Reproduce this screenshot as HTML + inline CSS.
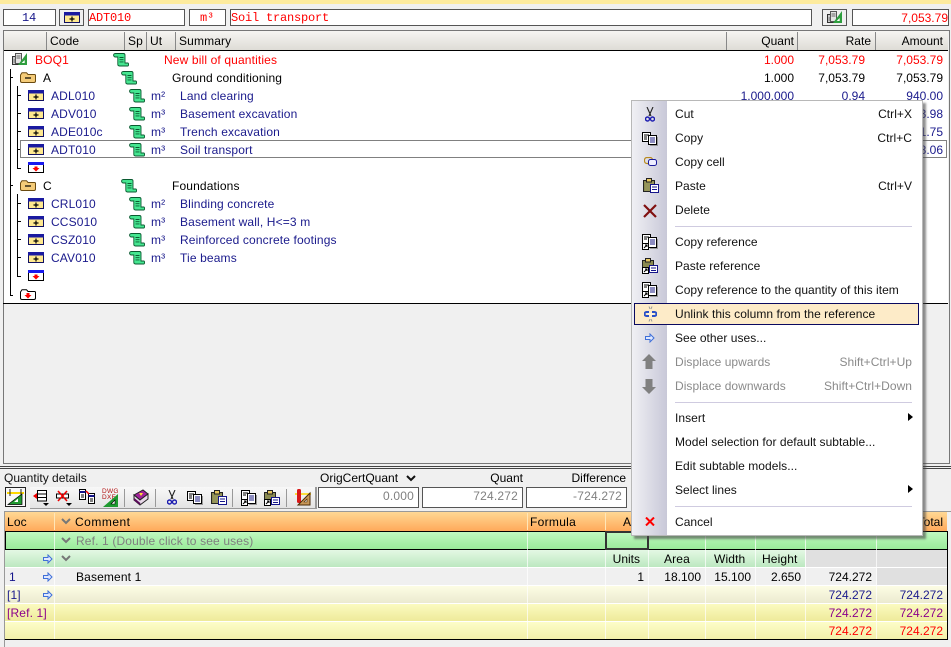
<!DOCTYPE html>
<html><head><meta charset="utf-8"><style>
html,body{margin:0;padding:0}
body{width:951px;height:647px;overflow:hidden;position:relative;background:#f0f0f0;font:12px/18px "Liberation Sans",Arial,sans-serif;color:#000}
div,svg{position:absolute}
.t,.r{position:absolute;white-space:nowrap;height:18px;line-height:18px}
.t{letter-spacing:.14px}
.mono{font:12px/18px "Liberation Mono",monospace;letter-spacing:-.2px}
.rows .t,.rows .r{margin-top:1px}
.b{color:#1a1a8c}.red{color:#f00}.p{color:#8b008b}.g{color:#808080}
.f{background:#fff;border:1px solid #555;box-sizing:border-box}
.m{color:#111;letter-spacing:.04px}
.dis{color:#8a8a8a}
.l{background:#000}
.gl{background:#fff}
.sep{background:#cfcbe0;left:675px;width:237px;height:1px}
</style></head><body>
<svg width="0" height="0" style="position:absolute"><defs>
<symbol id="i" viewBox="0 0 16 11"><rect x=".5" y=".5" width="15" height="10" fill="#ffe98f" stroke="#101060"/><rect width="16" height="3.5" fill="#1a1aa0"/><path d="M8 4.500v5M5.500 7h5" stroke="#000" stroke-width="1.200"/></symbol>
<symbol id="e" viewBox="0 0 16 11"><rect x=".5" y=".5" width="15" height="10" fill="#fff" stroke="#000"/><rect width="16" height="3" fill="#1a1aee"/><path d="M8 9.500 4.500 6h2V4.500h3V6h2z" fill="#f00"/></symbol>
<symbol id="s" viewBox="0 0 16 14"><path d="M.7 1.500C1 .7 1.500.5 2.500.5h8c1 0 1.500.7 1.500 1.500v8h3c.8.500.8 2.600 0 3H6.500c-1 0-1.700-.7-1.700-1.700V4H2.300C1 4 .3 2.500.7 1.500z" fill="#45e690" stroke="#0a5a30" stroke-width=".9"/><path d="M6.500 4.500h4M6.500 6.700h4M6.500 8.900h4" stroke="#0a5a30" stroke-width=".9"/></symbol>
<symbol id="fo" viewBox="0 0 16 11"><path d="M.5 3 2 .7h4.500L8 2.500h6.500c.6 0 1 .5 1 1v5.500c0 1-.7 1.500-1.500 1.500H2c-1 0-1.500-.7-1.500-1.500z" fill="#f4cb78" stroke="#6a4a10"/><path d="M5 6h6" stroke="#000" stroke-width="1.200"/></symbol>
<symbol id="boq" viewBox="0 0 15 12"><rect x=".5" y="3.500" width="6" height="8" fill="#ccc" stroke="#333"/><rect x="3.500" y=".5" width="6" height="10" fill="#e4e4e4" stroke="#555"/><path d="M4.500 3h4M4.500 5h4M1.500 7h2M1.500 9h2" stroke="#666"/><path d="M15 0v12H6z" fill="#2e9e3e"/><path d="M12.700 7v3h-3z" fill="#fff"/></symbol>
<symbol id="arr" viewBox="0 0 10 10"><path d="M.5 3.500h4.500V1l4 4-4 4V6.500H.5z" fill="#dfe8ff" stroke="#3f6fd8"/></symbol>
<symbol id="chev" viewBox="0 0 10 7"><path d="M1 1l4 4 4-4" fill="none" stroke="#777" stroke-width="2"/></symbol>
<symbol id="cut" viewBox="0 0 10 15"><path d="M2 0l4 9M8 0L4 9" stroke="#222" fill="none" stroke-width="1.100"/><circle cx="2.500" cy="12" r="2" fill="none" stroke="#1a1ab0" stroke-width="1.400"/><circle cx="7.500" cy="12" r="2" fill="none" stroke="#1a1ab0" stroke-width="1.400"/></symbol>
<symbol id="copy" viewBox="0 0 16 14"><path d="M9 5h7v9H8z" fill="#999"/><rect x=".5" y=".5" width="8" height="9" fill="#fff" stroke="#000"/><path d="M2 3h5M2 5h3M2 7h3" stroke="#000"/><rect x="6.500" y="3.500" width="8" height="9" fill="#fff" stroke="#000"/><path d="M8 6h5M8 8h5M8 10h5" stroke="#1a1a80"/></symbol>
<symbol id="paste" viewBox="0 0 16 15"><rect x=".5" y="2.500" width="11" height="11" fill="#8a8a50" stroke="#222"/><path d="M2 4h9v9H2z" fill="#9a9a60" opacity=".7"/><rect x="3.500" y=".5" width="5" height="3.500" fill="#e8c860" stroke="#222"/><rect x="7.500" y="6.500" width="8" height="8" fill="#fff" stroke="#14148a"/><path d="M9 9h5M9 11.500h5" stroke="#14148a"/></symbol>
<symbol id="cref" viewBox="0 0 16 16"><path d="M9 5h7v10H8z" fill="#999"/><rect x=".5" y=".5" width="8" height="10" fill="#fff" stroke="#000"/><path d="M2 3h5M2 5h3" stroke="#000"/><rect x="6.500" y="3.500" width="8" height="10" fill="#fff" stroke="#000"/><path d="M8 6h5M8 8h5M8 10h5" stroke="#1a1a80"/><rect x=".5" y="9.500" width="6" height="6" fill="#fff" stroke="#000"/><path d="M2 14l3-3M3 11h2v2" stroke="#000" fill="none"/></symbol>
<symbol id="pref" viewBox="0 0 16 16"><rect x=".5" y="2.500" width="11" height="11" fill="#8a8a50" stroke="#222"/><rect x="3.500" y=".5" width="5" height="3.500" fill="#e8c860" stroke="#222"/><rect x="7.500" y="7.500" width="8" height="7" fill="#fff" stroke="#14148a"/><path d="M9 10h5M9 12.500h5" stroke="#14148a"/><rect x=".5" y="9.500" width="6" height="6" fill="#fff" stroke="#000"/><path d="M2 14l3-3M3 11h2v2" stroke="#000" fill="none"/></symbol>
</defs></svg>

<!-- top -->
<div style="left:0;top:0;width:951px;height:4px;background:#fdeb9e"></div>
<div class="f" style="left:3px;top:9px;width:53px;height:17px"></div>
<span class="t b mono" style="left:22px;top:9px">14</span>
<div class="f" style="left:59px;top:9px;width:25px;height:17px;background:#f0f0f0"></div>
<svg style="left:64px;top:12px" width="16" height="11"><use href="#i"/></svg>
<div class="f" style="left:88px;top:9px;width:97px;height:17px"></div>
<span class="t red mono" style="left:89px;top:9px">ADT010</span>
<div class="f" style="left:189px;top:9px;width:37px;height:17px"></div>
<span class="t red mono" style="left:200px;top:9px">m³</span>
<div class="f" style="left:230px;top:9px;width:582px;height:17px"></div>
<span class="t red mono" style="left:231px;top:9px">Soil transport</span>
<div class="f" style="left:822px;top:9px;width:25px;height:17px;background:#f0f0f0"></div>
<svg style="left:827px;top:11px" width="15" height="12"><use href="#boq"/></svg>
<div class="f" style="left:852px;top:9px;width:97px;height:17px"></div>
<span class="r red" style="right:3px;top:9px">7,053.79</span>

<!-- main grid -->
<div style="left:3px;top:30px;width:945px;height:432px;border:1px solid #777;background:#f0f0f0"></div>
<div style="left:4px;top:31px;width:944px;height:19px;background:linear-gradient(#f6f5f2,#dedcd6)"></div>
<div class="l" style="left:4px;top:50px;width:944px;height:1px"></div>
<div style="left:4px;top:51px;width:944px;height:252px;background:#fff"></div>
<div class="l" style="left:3px;top:303px;width:945px;height:1px"></div>
<div style="left:46px;top:32px;width:1px;height:18px;background:#888"></div>
<div style="left:124px;top:32px;width:1px;height:18px;background:#888"></div>
<div style="left:146px;top:32px;width:1px;height:18px;background:#888"></div>
<div style="left:175px;top:32px;width:1px;height:18px;background:#888"></div>
<div style="left:726px;top:32px;width:1px;height:18px;background:#888"></div>
<div style="left:797px;top:32px;width:1px;height:18px;background:#888"></div>
<div style="left:875px;top:32px;width:1px;height:18px;background:#888"></div>
<span class="t" style="left:50px;top:32px">Code</span>
<span class="t" style="left:128px;top:32px">Sp</span>
<span class="t" style="left:150px;top:32px">Ut</span>
<span class="t" style="left:179px;top:32px">Summary</span>
<span class="r" style="right:157px;top:32px">Quant</span>
<span class="r" style="right:80px;top:32px">Rate</span>
<span class="r" style="right:8px;top:32px">Amount</span>

<!-- tree lines -->
<div class="l" style="left:10px;top:69px;width:1px;height:226px"></div>
<div class="l" style="left:10px;top:295px;width:3px;height:1px"></div>
<div class="l" style="left:10px;top:77px;width:3px;height:1px"></div>
<div class="l" style="left:10px;top:185px;width:3px;height:1px"></div>
<div class="l" style="left:17px;top:86px;width:1px;height:83px"></div>
<div class="l" style="left:17px;top:194px;width:1px;height:83px"></div>
<div class="l" style="left:18px;top:95px;width:3px;height:1px"></div>
<div class="l" style="left:18px;top:113px;width:3px;height:1px"></div>
<div class="l" style="left:18px;top:131px;width:3px;height:1px"></div>
<div class="l" style="left:18px;top:149px;width:3px;height:1px"></div>
<div class="l" style="left:18px;top:168px;width:3px;height:1px"></div>
<div class="l" style="left:18px;top:203px;width:3px;height:1px"></div>
<div class="l" style="left:18px;top:221px;width:3px;height:1px"></div>
<div class="l" style="left:18px;top:239px;width:3px;height:1px"></div>
<div class="l" style="left:18px;top:257px;width:3px;height:1px"></div>
<div class="l" style="left:18px;top:276px;width:3px;height:1px"></div>

<!-- selected row -->
<div style="left:20px;top:140px;width:927px;height:18px;border:1px solid #808080;box-sizing:border-box"></div>

<!-- rows -->
<div class="rows" style="left:0;top:0;width:951px;height:0">
<svg style="left:12px;top:53px" width="15" height="12"><use href="#boq"/></svg>
<span class="t red" style="left:35px;top:50px">BOQ1</span>
<svg style="left:113px;top:53px" width="16" height="14"><use href="#s"/></svg>
<span class="t red" style="left:164px;top:50px">New bill of quantities</span>
<span class="r red" style="right:157px;top:50px">1.000</span>
<span class="r red" style="right:86px;top:50px">7,053.79</span>
<span class="r red" style="right:8px;top:50px">7,053.79</span>

<svg style="left:20px;top:72px" width="16" height="11"><use href="#fo"/></svg>
<span class="t" style="left:43px;top:68px">A</span>
<svg style="left:121px;top:71px" width="16" height="14"><use href="#s"/></svg>
<span class="t" style="left:172px;top:68px">Ground conditioning</span>
<span class="r" style="right:157px;top:68px">1.000</span>
<span class="r" style="right:86px;top:68px">7,053.79</span>
<span class="r" style="right:8px;top:68px">7,053.79</span>

<svg style="left:28px;top:90px" width="16" height="11"><use href="#i"/></svg>
<span class="t b" style="left:51px;top:86px">ADL010</span>
<svg style="left:129px;top:89px" width="16" height="14"><use href="#s"/></svg>
<span class="t b" style="left:151px;top:86px">m²</span>
<span class="t b" style="left:180px;top:86px">Land clearing</span>
<span class="r b" style="right:157px;top:86px">1,000.000</span>
<span class="r b" style="right:86px;top:86px">0.94</span>
<span class="r b" style="right:8px;top:86px">940.00</span>

<svg style="left:28px;top:108px" width="16" height="11"><use href="#i"/></svg>
<span class="t b" style="left:51px;top:104px">ADV010</span>
<svg style="left:129px;top:107px" width="16" height="14"><use href="#s"/></svg>
<span class="t b" style="left:151px;top:104px">m³</span>
<span class="t b" style="left:180px;top:104px">Basement excavation</span>
<span class="r b" style="right:8px;top:104px">33.98</span>

<svg style="left:28px;top:126px" width="16" height="11"><use href="#i"/></svg>
<span class="t b" style="left:51px;top:122px">ADE010c</span>
<svg style="left:129px;top:125px" width="16" height="14"><use href="#s"/></svg>
<span class="t b" style="left:151px;top:122px">m³</span>
<span class="t b" style="left:180px;top:122px">Trench excavation</span>
<span class="r b" style="right:8px;top:122px">11.75</span>

<svg style="left:28px;top:144px" width="16" height="11"><use href="#i"/></svg>
<span class="t b" style="left:51px;top:140px">ADT010</span>
<svg style="left:129px;top:143px" width="16" height="14"><use href="#s"/></svg>
<span class="t b" style="left:151px;top:140px">m³</span>
<span class="t b" style="left:180px;top:140px">Soil transport</span>
<span class="r b" style="right:8px;top:140px">38.06</span>

<svg style="left:28px;top:162px" width="16" height="11"><use href="#e"/></svg>

<svg style="left:20px;top:180px" width="16" height="11"><use href="#fo"/></svg>
<span class="t" style="left:43px;top:176px">C</span>
<svg style="left:121px;top:179px" width="16" height="14"><use href="#s"/></svg>
<span class="t" style="left:172px;top:176px">Foundations</span>

<svg style="left:28px;top:198px" width="16" height="11"><use href="#i"/></svg>
<span class="t b" style="left:51px;top:194px">CRL010</span>
<svg style="left:129px;top:197px" width="16" height="14"><use href="#s"/></svg>
<span class="t b" style="left:151px;top:194px">m²</span>
<span class="t b" style="left:180px;top:194px">Blinding concrete</span>

<svg style="left:28px;top:216px" width="16" height="11"><use href="#i"/></svg>
<span class="t b" style="left:51px;top:212px">CCS010</span>
<svg style="left:129px;top:215px" width="16" height="14"><use href="#s"/></svg>
<span class="t b" style="left:151px;top:212px">m³</span>
<span class="t b" style="left:180px;top:212px">Basement wall, H&lt;=3 m</span>

<svg style="left:28px;top:234px" width="16" height="11"><use href="#i"/></svg>
<span class="t b" style="left:51px;top:230px">CSZ010</span>
<svg style="left:129px;top:233px" width="16" height="14"><use href="#s"/></svg>
<span class="t b" style="left:151px;top:230px">m³</span>
<span class="t b" style="left:180px;top:230px">Reinforced concrete footings</span>

<svg style="left:28px;top:252px" width="16" height="11"><use href="#i"/></svg>
<span class="t b" style="left:51px;top:248px">CAV010</span>
<svg style="left:129px;top:251px" width="16" height="14"><use href="#s"/></svg>
<span class="t b" style="left:151px;top:248px">m³</span>
<span class="t b" style="left:180px;top:248px">Tie beams</span>

<svg style="left:28px;top:270px" width="16" height="11"><use href="#e"/></svg>
<svg style="left:20px;top:289px" width="16" height="11"><path d="M.5 3 2 .7h4.500L8 2.500h6.500c.6 0 1 .5 1 1v5.500c0 1-.7 1.500-1.500 1.500H2c-1 0-1.500-.7-1.500-1.500z" fill="#fff" stroke="#000"/><path d="M8 9.500 4.500 6h2V4h3v2h2z" fill="#f00"/></svg>
</div>

<!-- splitter -->
<div style="left:0;top:466px;width:951px;height:1px;background:#444"></div>
<div style="left:0;top:468px;width:951px;height:1px;background:#444"></div>

<!-- quantity details -->
<span class="t" style="left:4px;top:469px;color:#111;letter-spacing:0">Quantity details</span>
<div style="left:5px;top:487px;width:21px;height:20px;border:1px solid #222;box-sizing:border-box;background:#f8f8f8"></div>
<svg style="left:7px;top:489px" width="17" height="16"><path d="M0 4h17" stroke="#ffd800" stroke-width="2"/><path d="M3 0v7M14 0v7" stroke="#222"/><path d="M1 15.500 15 5v10.500z" fill="#1f9a30" stroke="#000" stroke-width=".7"/><path d="M11 9.500v3.500H7z" fill="#fff"/></svg>
<div style="left:30px;top:487px;width:287px;height:22px;background:linear-gradient(#f8f8f8,#e4e4e4);border-bottom:1px solid #999;border-right:1px solid #999;box-sizing:border-box"></div>
<div style="left:124px;top:489px;width:1px;height:18px;background:#999"></div>
<div style="left:155px;top:489px;width:1px;height:18px;background:#999"></div>
<div style="left:232px;top:489px;width:1px;height:18px;background:#999"></div>
<div style="left:286px;top:489px;width:1px;height:18px;background:#999"></div>
<svg style="left:33px;top:490px" width="16" height="16"><rect x="4.500" y=".5" width="9" height="3.500" fill="#fff" stroke="#000"/><rect x="4.500" y="4" width="9" height="3.500" fill="#fff" stroke="#000"/><rect x="4.500" y="7.500" width="9" height="3.500" fill="#fff" stroke="#000"/><path d="M0 6l4-3v6z" fill="#e00"/><path d="M10 13h6l-3 3z" fill="#000"/></svg>
<svg style="left:56px;top:490px" width="17" height="16"><rect x=".5" y="4" width="12" height="4" fill="#fff" stroke="#000"/><path d="M2 1l9 10M11 1L2 11" stroke="#e00" stroke-width="1.600"/><path d="M10 13h6l-3 3z" fill="#000"/></svg>
<svg style="left:79px;top:489px" width="16" height="15"><rect x=".5" y=".5" width="6" height="10" fill="#fff" stroke="#000"/><rect x="9.500" y="4.500" width="6" height="10" fill="#fff" stroke="#000"/><path d="M.5 3h6M9.500 7h6" stroke="#14148a" stroke-width="2"/><path d="M2 6h3M2 8h3M11 10h3M11 12h3" stroke="#000"/><path d="M7 2l3 3" stroke="#e00" stroke-width="1.500"/></svg>
<svg style="left:102px;top:489px" width="17" height="18"><path d="M16 5v13H1z" fill="#1f9a30"/><path d="M13 11v4H9z" fill="#fff" stroke="#000" stroke-width=".6"/></svg>
<span class="t" style="left:102px;top:488px;font-size:6.500px;line-height:7px;color:#b01010;height:7px;letter-spacing:.3px">DWG</span>
<span class="t" style="left:102px;top:494px;font-size:6.500px;line-height:7px;color:#b01010;height:7px;letter-spacing:.3px">DXF</span>
<svg style="left:133px;top:489px" width="16" height="17"><path d="M1 6l9-5 5 4-8 6z" fill="#a0229a" stroke="#222"/><path d="M1 6v5l6 5 8-6V5l-8 6z" fill="#e8d8e8" stroke="#222"/><path d="M1 10l6 5" stroke="#5a0a5a" stroke-width="2"/><path d="M6 4l4 0-2 3z" fill="#ffe030"/></svg>
<svg style="left:167px;top:490px" width="10" height="15"><use href="#cut"/></svg>
<svg style="left:187px;top:491px" width="16" height="14"><use href="#copy"/></svg>
<svg style="left:211px;top:490px" width="16" height="15"><use href="#paste"/></svg>
<svg style="left:241px;top:490px" width="16" height="16"><use href="#cref"/></svg>
<svg style="left:264px;top:490px" width="16" height="16"><use href="#pref"/></svg>
<svg style="left:295px;top:489px" width="16" height="17"><path d="M0 5h16" stroke="#ffd800" stroke-width="1.500"/><rect x="2" y="0" width="4" height="14" rx="1.500" fill="#d81818"/><path d="M15 4v12H3z" fill="#c89858" stroke="#4a2a08"/><path d="M12 10v3H9z" fill="#f0f0f0" stroke="#4a2a08" stroke-width=".6"/></svg>
<div style="left:315px;top:487px;width:1px;height:22px;background:#999"></div>

<span class="t" style="left:320px;top:469px;letter-spacing:0">OrigCertQuant</span>
<svg style="left:406px;top:475px" width="10" height="7"><path d="M1 1l4 4 4-4" fill="none" stroke="#111" stroke-width="2"/></svg>
<span class="r" style="right:428px;top:469px">Quant</span>
<span class="r" style="right:325px;top:469px">Difference</span>
<div class="f" style="left:318px;top:487px;width:101px;height:21px"></div>
<div class="f" style="left:422px;top:487px;width:101px;height:21px"></div>
<div class="f" style="left:526px;top:487px;width:101px;height:21px"></div>
<span class="r g" style="right:537px;top:487px;letter-spacing:.2px">0.000</span>
<span class="r g" style="right:433px;top:487px;letter-spacing:.2px">724.272</span>
<span class="r g" style="right:329px;top:487px;letter-spacing:.2px">-724.272</span>

<!-- lower table -->
<div style="left:4px;top:511px;width:947px;height:1px;background:#999"></div>
<div style="left:4px;top:511px;width:1px;height:136px;background:#999"></div>
<div style="left:5px;top:512px;width:942px;height:19px;background:linear-gradient(#ffd894,#ffa95a)"></div>
<div style="left:5px;top:532px;width:942px;height:17px;background:linear-gradient(#c0f8c0,#9aeb9a)"></div>
<div class="l" style="left:5px;top:531px;width:943px;height:1px"></div>
<div class="l" style="left:5px;top:549px;width:943px;height:1px"></div>
<div class="l" style="left:5px;top:531px;width:1px;height:19px"></div>
<div class="l" style="left:947px;top:531px;width:1px;height:19px"></div>
<div style="left:5px;top:550px;width:800px;height:17px;background:linear-gradient(#e4f8e4,#bce8c0)"></div>
<div style="left:806px;top:550px;width:141px;height:17px;background:#e0e0e0"></div>
<div style="left:5px;top:568px;width:871px;height:17px;background:#f0f0f0"></div>
<div style="left:877px;top:568px;width:70px;height:17px;background:#e0e0e0"></div>
<div style="left:5px;top:586px;width:942px;height:17px;background:linear-gradient(#fdfde4,#ecead0)"></div>
<div style="left:5px;top:604px;width:942px;height:17px;background:linear-gradient(#fbfbc0,#eeea9a)"></div>
<div style="left:5px;top:622px;width:942px;height:17px;background:linear-gradient(#fdfdc8,#f2f0aa)"></div>
<div class="l" style="left:5px;top:639px;width:943px;height:1px"></div>
<div class="l" style="left:947px;top:531px;width:1px;height:109px"></div>
<div class="gl" style="left:5px;top:567px;width:942px;height:1px"></div>
<div class="gl" style="left:5px;top:585px;width:942px;height:1px"></div>
<div class="gl" style="left:5px;top:603px;width:942px;height:1px"></div>
<div class="gl" style="left:5px;top:621px;width:942px;height:1px"></div>
<div class="gl" style="left:54px;top:532px;width:1px;height:107px;opacity:.7"></div>
<div class="gl" style="left:527px;top:532px;width:1px;height:107px;opacity:.7"></div>
<div class="gl" style="left:605px;top:532px;width:1px;height:107px;opacity:.7"></div>
<div class="gl" style="left:648px;top:532px;width:1px;height:107px;opacity:.7"></div>
<div class="gl" style="left:705px;top:532px;width:1px;height:107px;opacity:.7"></div>
<div class="gl" style="left:755px;top:532px;width:1px;height:107px;opacity:.7"></div>
<div class="gl" style="left:805px;top:532px;width:1px;height:107px;opacity:.7"></div>
<div class="gl" style="left:876px;top:532px;width:1px;height:107px;opacity:.7"></div>
<div style="left:54px;top:513px;width:1px;height:17px;background:#ffe6b8"></div>
<div style="left:527px;top:513px;width:1px;height:17px;background:#ffe6b8"></div>
<div style="left:605px;top:513px;width:1px;height:17px;background:#ffe6b8"></div>
<span class="t" style="left:7px;top:513px">Loc</span>
<svg style="left:61px;top:518px" width="10" height="7"><use href="#chev"/></svg>
<span class="t" style="left:75px;top:513px;letter-spacing:.5px">Comment</span>
<span class="t" style="left:530px;top:513px;letter-spacing:.3px">Formula</span>
<span class="t" style="left:623px;top:513px">A</span>
<span class="r" style="right:8px;top:513px">Total</span>
<svg style="left:61px;top:537px" width="10" height="7"><use href="#chev"/></svg>
<span class="t g" style="left:76px;top:532px">Ref. 1 (Double click to see uses)</span>
<div style="left:605px;top:531px;width:44px;height:19px;border:2px solid #333;box-sizing:border-box"></div>
<svg style="left:43px;top:554px" width="10" height="10"><use href="#arr"/></svg>
<svg style="left:61px;top:555px" width="10" height="7"><use href="#chev"/></svg>
<span class="r" style="right:311px;top:550px">Units</span>
<span class="t" style="left:664px;top:550px">Area</span>
<span class="t" style="left:714px;top:550px">Width</span>
<span class="t" style="left:762px;top:550px">Height</span>
<span class="t" style="left:9px;top:568px;color:#14148a">1</span>
<svg style="left:43px;top:572px" width="10" height="10"><use href="#arr"/></svg>
<span class="t" style="left:76px;top:568px">Basement 1</span>
<span class="r" style="right:307px;top:568px">1</span>
<span class="r" style="right:250px;top:568px">18.100</span>
<span class="r" style="right:200px;top:568px">15.100</span>
<span class="r" style="right:150px;top:568px">2.650</span>
<span class="r" style="right:79px;top:568px">724.272</span>
<span class="t b" style="left:7px;top:586px">[1]</span>
<svg style="left:43px;top:590px" width="10" height="10"><use href="#arr"/></svg>
<span class="r b" style="right:79px;top:586px">724.272</span>
<span class="r b" style="right:8px;top:586px">724.272</span>
<span class="t p" style="left:7px;top:604px">[Ref. 1]</span>
<span class="r p" style="right:79px;top:604px">724.272</span>
<span class="r p" style="right:8px;top:604px">724.272</span>
<span class="r red" style="right:79px;top:622px">724.272</span>
<span class="r red" style="right:8px;top:622px">724.272</span>

<!-- context menu -->
<div style="left:631px;top:100px;width:292px;height:436px;background:#fff;border:1px solid #b8b8b8;box-sizing:border-box;box-shadow:3px 3px 2px rgba(70,70,70,.6)"></div>
<div style="left:632px;top:101px;width:35px;height:434px;background:linear-gradient(90deg,#f0f0f4,#c8c8d8)"></div>
<div style="left:634px;top:303px;width:285px;height:22px;background:#fdebc8;border:1px solid #0a0a60;box-sizing:border-box"></div>
<div class="sep" style="top:226px"></div>
<div class="sep" style="top:402px"></div>
<div class="sep" style="top:506px"></div>

<svg style="left:645px;top:107px" width="10" height="15"><use href="#cut"/></svg>
<span class="t m" style="left:675px;top:105px">Cut</span><span class="r m" style="right:39px;top:105px">Ctrl+X</span>
<svg style="left:642px;top:132px" width="16" height="14"><use href="#copy"/></svg>
<span class="t m" style="left:675px;top:129px">Copy</span><span class="r m" style="right:39px;top:129px">Ctrl+C</span>
<svg style="left:644px;top:157px" width="13" height="9"><rect x=".5" y=".5" width="8" height="6" rx="2.500" fill="none" stroke="#b88a20" stroke-width="1.200"/><rect x="4.500" y="2.500" width="8" height="6" rx="2" fill="#eef" stroke="#1a1a9a"/></svg>
<span class="t m" style="left:675px;top:153px">Copy cell</span>
<svg style="left:643px;top:178px" width="16" height="15"><use href="#paste"/></svg>
<span class="t m" style="left:675px;top:177px">Paste</span><span class="r m" style="right:39px;top:177px">Ctrl+V</span>
<svg style="left:643px;top:204px" width="14" height="14"><path d="M1 1l12 12M13 1L1 13" stroke="#801010" stroke-width="2.200"/></svg>
<span class="t m" style="left:675px;top:201px">Delete</span>
<svg style="left:642px;top:234px" width="16" height="16"><use href="#cref"/></svg>
<span class="t m" style="left:675px;top:233px">Copy reference</span>
<svg style="left:642px;top:258px" width="16" height="16"><use href="#pref"/></svg>
<span class="t m" style="left:675px;top:257px">Paste reference</span>
<svg style="left:642px;top:282px" width="16" height="16"><use href="#cref"/></svg>
<span class="t m" style="left:675px;top:281px">Copy reference to the quantity of this item</span>
<svg style="left:644px;top:306px" width="13" height="16"><path d="M5 6H2.500a2 2 0 0 0 0 4H5M8 6h2.500a2 2 0 0 1 0 4H8" stroke="#2a50c8" stroke-width="2" fill="none"/><path d="M4 8h5" stroke="#fff" stroke-width="1"/><path d="M5 .5 6 3M8 .5 7 3M5 15.500 6 13M8 15.500 7 13" stroke="#999"/></svg>
<span class="t m" style="left:675px;top:305px">Unlink this column from the reference</span>
<svg style="left:645px;top:333px" width="10" height="10"><use href="#arr"/></svg>
<span class="t m" style="left:675px;top:329px">See other uses...</span>
<svg style="left:642px;top:354px" width="14" height="16"><path d="M7 0l7 7h-3.500v8h-7V7H0z" fill="#808080"/></svg>
<span class="t m dis" style="left:675px;top:353px">Displace upwards</span><span class="r m dis" style="right:39px;top:353px">Shift+Ctrl+Up</span>
<svg style="left:642px;top:378px" width="14" height="16"><path d="M7 16l7-7h-3.500V1h-7v8H0z" fill="#808080"/></svg>
<span class="t m dis" style="left:675px;top:377px">Displace downwards</span><span class="r m dis" style="right:39px;top:377px">Shift+Ctrl+Down</span>
<span class="t m" style="left:675px;top:409px">Insert</span>
<svg style="left:908px;top:413px" width="5" height="8"><path d="M0 0l5 4-5 4z"/></svg>
<span class="t m" style="left:675px;top:433px">Model selection for default subtable...</span>
<span class="t m" style="left:675px;top:457px">Edit subtable models...</span>
<span class="t m" style="left:675px;top:481px">Select lines</span>
<svg style="left:908px;top:485px" width="5" height="8"><path d="M0 0l5 4-5 4z"/></svg>
<svg style="left:645px;top:517px" width="10" height="9"><path d="M1 .5l8 8M9 .5l-8 8" stroke="#f00" stroke-width="2"/></svg>
<span class="t m" style="left:675px;top:513px">Cancel</span>
</body></html>
